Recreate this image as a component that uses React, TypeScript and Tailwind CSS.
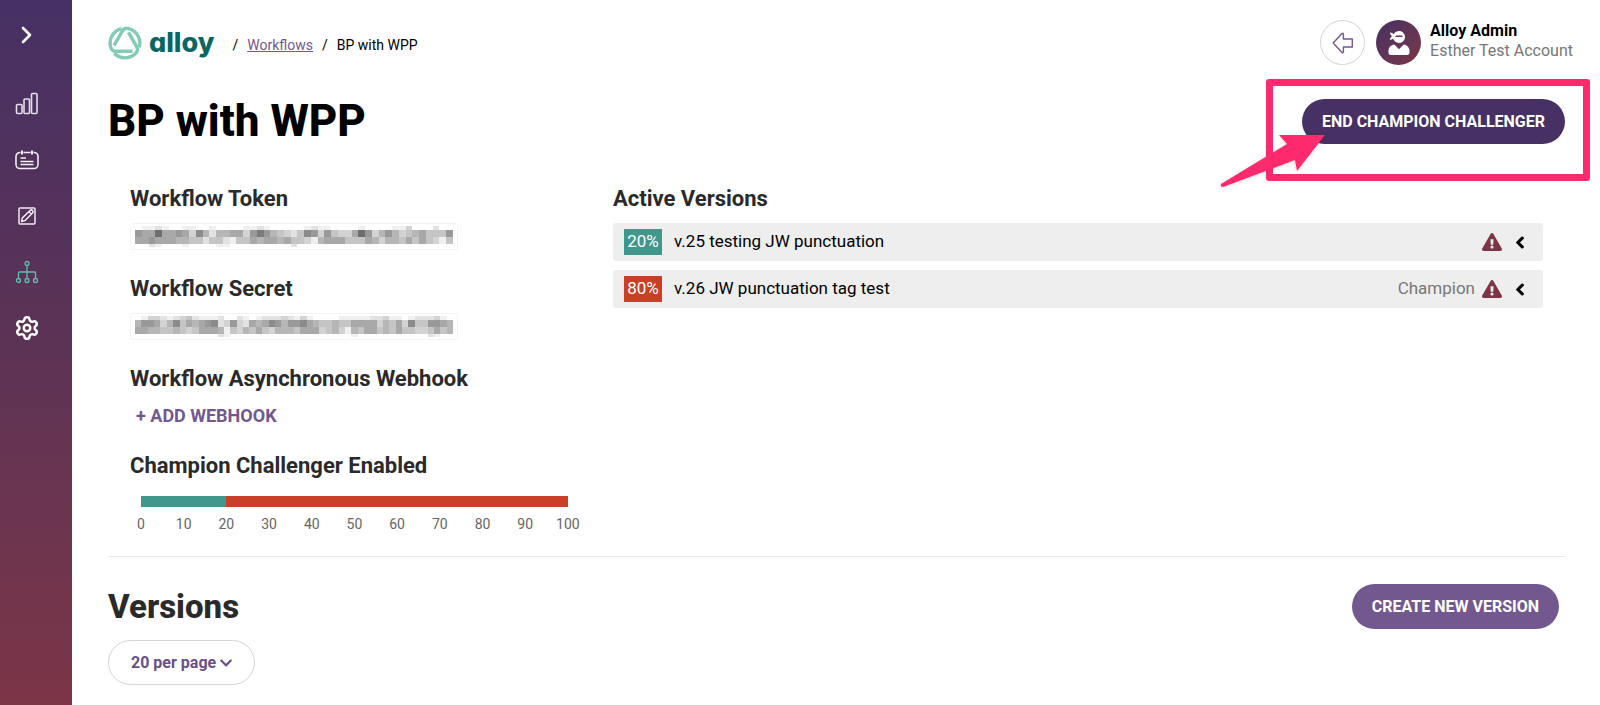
import { Settings } from "lucide-react"
import { FaChevronDown, FaChevronLeft, FaExclamationTriangle, FaUserNinja } from "react-icons/fa"

const versions = [
  { id: 25, share: 20, name: "v.25 testing JW punctuation", champion: false, color: "bg-[#41978c]" },
  { id: 26, share: 80, name: "v.26 JW punctuation tag test", champion: true, color: "bg-[#c93f27]" },
]

const ticks = [0, 10, 20, 30, 40, 50, 60, 70, 80, 90, 100]

// one hex digit per block, f = white
const tokenBlocks = [
  "feedeffeeffeffffeedefffffedeeffffeffffeecfffdff",
  "89959989c7adaa99c868abcdb78c8bcc958ca8acba9bbb8",
  "998999aabbdbbdebb9a99a9bbcea999bbb9acaab9b9bceb",
  "ffdefffeffffeefffffffffdfffffffffffffffffffffff",
]

const secretBlocks = [
  "feccdedcbdeeedffdefedddcdeceffffeeeeeddceefedddcef",
  "a889ca7b9a987dc8cd9a978a8879abbabb9999cab9c7bb889a",
  "99aabbabcb999aebcab9bcaaab999cbaceab99bab9bbccb9ba",
  "fffffffffffffdefffffffffffffffffffefffffffffffdeff",
]

const Redacted = ({ label, blocks }: { label: string; blocks: string[] }) => {
  const heights = [4, 7, 7, 3]
  const width = 20
  return (
    <div className="flex h-[27px] w-[328px] items-center justify-center rounded-[3px] border border-gray-100">
      <svg
        role="img"
        aria-label={label}
        className="h-[21px] w-[318px] opacity-85"
        viewBox={`0 0 ${blocks[0].length * width} 21`}
        preserveAspectRatio="none"
        shapeRendering="crispEdges"
      >
        {blocks.map((row, r) =>
          row.split("").map((shade, c) => (
            <rect
              key={`${r}-${c}`}
              x={c * width}
              y={heights.slice(0, r).reduce((a, b) => a + b, 0)}
              width={width}
              height={heights[r]}
              fill={`#${shade}${shade}${shade}`}
            />
          ))
        )}
      </svg>
    </div>
  )
}

const Sidebar = () => {
  return (
    <nav className="flex w-[72px] shrink-0 flex-col bg-linear-to-b from-[#463064] via-[#5d3355] to-[#7c3547] pt-[23px] pl-[14px] text-white">
      <button aria-label="Expand menu" className="flex h-6 w-[26px] items-center justify-center">
        <svg width="12" height="18" viewBox="0 0 12 18" fill="none" stroke="currentColor" strokeWidth="2.6" strokeLinecap="round" strokeLinejoin="round">
          <path d="M2 2l7 7-7 7" />
        </svg>
      </button>
      <div className="mt-[43px] flex flex-col gap-7">
        <a href="#dashboard" aria-label="Dashboard" className="flex h-7 w-[26px] items-center justify-center">
          <svg width="24" height="24" viewBox="0 0 24 24" fill="none" stroke="#e4dfea" strokeWidth="1.6">
            <rect x="1.5" y="12.5" width="5.5" height="9" rx="1" />
            <rect x="9" y="7" width="5.5" height="14.5" rx="1" />
            <rect x="16.5" y="1.5" width="5.5" height="20" rx="1" />
          </svg>
        </a>
        <a href="#events" aria-label="Events" className="flex h-7 w-[26px] items-center justify-center">
          <svg width="24" height="20" viewBox="0 0 24 20" fill="none" stroke="#f1eef3" strokeWidth="1.6">
            <path d="M5.500 2.500H5A4 4 0 0 0 1 6.500v8a4 4 0 0 0 4 4h14a4 4 0 0 0 4-4v-8a4 4 0 0 0-4-4h-.5M8.500 2.500h7" />
            <path d="M7 .5v4M17 .5v4" strokeWidth="2" />
            <path d="M5.500 8H11M5.500 11.500h13M5.500 14.500h13" />
          </svg>
        </a>
        <a href="#reviews" aria-label="Reviews" className="flex h-7 w-[26px] items-center justify-center">
          <svg width="18" height="18" viewBox="0 0 18 18" fill="none" stroke="#eeeaf0" strokeWidth="1.5" strokeLinejoin="round">
            <rect x="1" y="1" width="16" height="16" rx="1" />
            <path d="M3.500 14.500l.9-3.600 7.600-7.400a1.700 1.700 0 0 1 2.500 2.500L7.100 13.600zM11 4.700L13.300 7" />
          </svg>
        </a>
        <a href="#workflows" aria-label="Workflows" className="flex h-7 w-[26px] items-center justify-center">
          <svg width="24" height="24" viewBox="0 0 24 24" fill="none" stroke="#62bfae" strokeWidth="1.3">
            <circle cx="12" cy="3.500" r="2" />
            <circle cx="3.500" cy="20.500" r="2" />
            <circle cx="12" cy="20.500" r="2" />
            <circle cx="20.500" cy="20.500" r="2" />
            <path d="M12 5.500v13M3.500 18.500V13a1 1 0 0 1 1-1h15a1 1 0 0 1 1 1v5.500" />
          </svg>
        </a>
        <a href="#settings" aria-label="Settings" className="flex h-7 w-[26px] items-center justify-center">
          <Settings className="h-[26px] w-[26px]" strokeWidth={2.3} />
        </a>
      </div>
    </nav>
  )
}

const Logo = () => {
  return (
    <div className="flex items-center gap-[7px]">
      <svg width="34" height="34" viewBox="0 0 34 34" fill="none" stroke="#82cbb8" strokeWidth="3.400" strokeLinejoin="round">
        {[0, 120, 240].map((angle) => (
          <path key={angle} transform={`rotate(${angle} 17 17)`} d="M13.500 2.600A14.900 14.900 0 0 0 2.600 20.800C3.300 23.800 5.500 25.300 8 25.300H24.500" />
        ))}
      </svg>
      <span className="font-['Inter'] text-[27px] leading-8 font-extrabold text-[#0a6664] [font-feature-settings:'cv11']">alloy</span>
    </div>
  )
}

const Header = () => {
  return (
    <header className="flex items-center justify-between pt-5">
      <div className="flex items-center">
        <Logo />
        <div className="ml-[18px] flex items-center gap-[9px] pt-[5px] text-[14px]">
          <span>/</span>
          <a href="#workflows" className="text-[#72588e] underline">Workflows</a>
          <span>/</span>
          <span>BP with WPP</span>
        </div>
      </div>
      <div className="flex items-center">
        <button aria-label="Back" className="flex h-[45px] w-[45px] items-center justify-center rounded-full border border-gray-300">
          <svg width="22" height="22" viewBox="0 0 22 22" fill="none" stroke="#72588e" strokeWidth="1.400" strokeLinejoin="round">
            <path d="M1.200 11L10 1.600c.6-.6 1.400-.3 1.400.6V7H20.300v8h-8.900v4.800c0 .9-.8 1.200-1.400.6z" />
          </svg>
        </button>
        <div className="ml-[11px] flex h-[45px] w-[45px] items-center justify-center rounded-full bg-linear-to-br from-[#463064] to-[#7c3547] text-white">
          <FaUserNinja className="h-6 w-6" />
        </div>
        <div className="ml-[9px] pb-[3px] text-[16px] leading-5">
          <div className="font-bold">Alloy Admin</div>
          <div className="text-[#777]">Esther Test Account</div>
        </div>
      </div>
    </header>
  )
}

const App = () => {
  return (
    <div className="flex min-h-screen bg-white font-['Roboto',sans-serif] text-black">
      <Sidebar />
      <main className="min-w-0 flex-1 pl-9">
        <div className="pr-[27px]">
          <Header />
        </div>

        <div className="pr-[35px]">
          {/* Title */}
          <div className="mt-8 flex items-start justify-between">
            <h1 className="text-[44px] leading-[48px] font-extrabold">BP with WPP</h1>
            <div className="relative mt-[2px]">
              <button className="h-[45px] rounded-full bg-[#463064] px-5 text-[16px] font-bold text-white">END CHAMPION CHALLENGER</button>
              {/* Callout */}
              <div className="pointer-events-none absolute -top-5 -right-[25px] -bottom-[37px] -left-9 rounded-[3px] border-[7px] border-[#ff2a6d]" />
              <svg className="pointer-events-none absolute top-8 -left-[82px] drop-shadow-sm" width="106" height="60" viewBox="0 0 106 60" fill="#ff2a6d">
                <path d="M1 53L67 13 59 4H105L77 40 75 29 3 56Q0 56 1 53z" />
              </svg>
            </div>
          </div>

          <div className="mt-[38px] flex pr-[22px] pl-[22px] text-[#2a2a2a]">
            <div className="w-[483px] shrink-0">
              <section>
                <h2 className="text-[22px] leading-8 font-bold">Workflow Token</h2>
                <div className="mt-2">
                  <Redacted label="Workflow token, hidden" blocks={tokenBlocks} />
                </div>
              </section>
              <section className="mt-[23px]">
                <h2 className="text-[22px] leading-8 font-bold">Workflow Secret</h2>
                <div className="mt-2">
                  <Redacted label="Workflow secret, hidden" blocks={secretBlocks} />
                </div>
              </section>
              <section className="mt-[23px]">
                <h2 className="text-[22px] leading-8 font-bold">Workflow Asynchronous Webhook</h2>
                <button className="mt-2 block px-[6px] text-[18px] leading-[26px] font-bold text-[#72588e]">+ ADD WEBHOOK</button>
              </section>
              <section className="mt-[21px]">
                <h2 className="text-[22px] leading-8 font-bold">Champion Challenger Enabled</h2>
                <div className="mt-[14px] ml-[11px] w-[427px]">
                  <div className="flex h-[11px]">
                    {versions.map((version) => (
                      <div key={version.id} className={version.color} style={{ width: `${version.share}%` }} />
                    ))}
                  </div>
                  <div className="mt-[7px] flex justify-between text-[14px] leading-5 text-[#666]">
                    {ticks.map((tick) => (
                      <span key={tick} className="flex w-0 justify-center">{tick}</span>
                    ))}
                  </div>
                </div>
              </section>
            </div>

            <section className="min-w-0 flex-1">
              <h2 className="text-[22px] leading-8 font-bold">Active Versions</h2>
              <ul className="mt-2 flex flex-col gap-[9px] text-[17px]">
                {versions.map((version) => (
                  <li key={version.id} className="flex h-[38px] items-center rounded-[3px] bg-[#eee] pr-[17px] pl-[11px] text-black">
                    <span className={`flex h-[26px] w-[38px] items-center justify-center text-white ${version.color}`}>{version.share}%</span>
                    <span className="ml-3">{version.name}</span>
                    {version.champion && <span className="ml-auto text-[#777]">Champion</span>}
                    <FaExclamationTriangle className={`h-5 w-5 text-[#7c3547] ${version.champion ? "ml-[7px]" : "ml-auto"}`} />
                    <button aria-label={`Show ${version.name}`} className="ml-3 flex w-3 justify-center">
                      <FaChevronLeft className="h-[13px] w-[13px]" stroke="currentColor" strokeWidth={40} />
                    </button>
                  </li>
                ))}
              </ul>
            </section>
          </div>

          {/* Versions */}
          <section className="mt-[22px] border-t border-gray-200 pt-[27px]">
            <div className="flex items-center justify-between pr-[6px]">
              <h2 className="text-[33px] leading-[44px] font-extrabold text-[#2a2a2a]">Versions</h2>
              <button className="h-[45px] rounded-full bg-[#72588e] px-5 text-[16px] font-bold text-white">CREATE NEW VERSION</button>
            </div>
            <div className="relative mt-[11px] w-[147px] text-[#6b4f8a]">
              <select aria-label="Rows per page" className="h-[45px] w-full appearance-none rounded-full border border-gray-300 pl-[22px] text-[16px] font-bold">
                <option>20 per page</option>
                <option>50 per page</option>
                <option>100 per page</option>
              </select>
              <FaChevronDown className="pointer-events-none absolute top-4 right-[22px] h-[14px] w-[14px]" />
            </div>
          </section>
        </div>
      </main>
    </div>
  )
}

export default App
